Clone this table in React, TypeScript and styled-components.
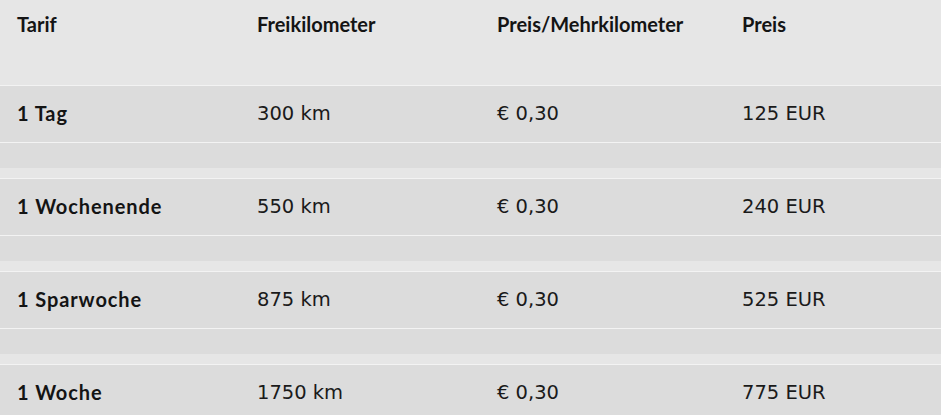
import styled, { createGlobalStyle } from "styled-components";

const Global = createGlobalStyle`
  html, body {
    margin: 0;
    padding: 0;
    background: #e6e6e6;
  }
  body {
    font-family: Lato, "Liberation Sans", sans-serif;
    color: #1a1a1a;
  }
`;

const Table = styled.div`
  width: 941px;
  background: #e6e6e6;
`;

const Grid = styled.div`
  display: grid;
  grid-template-columns: 240px 240px 245px 1fr;
`;

const HeadRow = styled(Grid)`
  height: 85px;
  align-items: start;
`;

const HeadCell = styled.div`
  padding: 10px 17px 0;
  font-family: Lato, "Liberation Sans", sans-serif;
  font-size: 20px;
  line-height: 28px;
  font-weight: 700;
  color: #141414;
`;

const Block = styled.div`
  margin-bottom: 10px;
`;

const Row = styled(Grid)`
  height: 56px;
  border-top: 1px solid #f3f3f3;
  background: #dcdcdc;
  align-items: center;
`;

const SubRow = styled.div`
  height: 25px;
  border-top: 1px solid #f3f3f3;
  background: #dcdcdc;
`;

const Cell = styled.div`
  padding: 0 17px;
  font-family: "DejaVu Sans", Lato, sans-serif;
  font-size: 19.5px;
  line-height: 24px;
  font-weight: 400;
  color: #1a1a1a;
`;

const NameCell = styled(Cell)`
  font-family: Lato, "Liberation Sans", sans-serif;
  font-size: 20px;
  font-weight: 700;
  letter-spacing: 0.9px;
  color: #141414;
  margin-top: -2px;
`;

const tariffs = [
  { name: "1 Tag", km: "300 km", extra: "€ 0,30", price: "125 EUR" },
  { name: "1 Wochenende", km: "550 km", extra: "€ 0,30", price: "240 EUR" },
  { name: "1 Sparwoche", km: "875 km", extra: "€ 0,30", price: "525 EUR" },
  { name: "1 Woche", km: "1750 km", extra: "€ 0,30", price: "775 EUR" },
];

export default function App() {
  return (
    <>
      <Global />
      <Table>
        <HeadRow>
          <HeadCell>Tarif</HeadCell>
          <HeadCell>Freikilometer</HeadCell>
          <HeadCell>Preis/Mehrkilometer</HeadCell>
          <HeadCell>Preis</HeadCell>
        </HeadRow>
        {tariffs.map((t) => (
          <Block key={t.name}>
            <Row>
              <NameCell>{t.name}</NameCell>
              <Cell>{t.km}</Cell>
              <Cell>{t.extra}</Cell>
              <Cell>{t.price}</Cell>
            </Row>
            <SubRow />
          </Block>
        ))}
      </Table>
    </>
  );
}
